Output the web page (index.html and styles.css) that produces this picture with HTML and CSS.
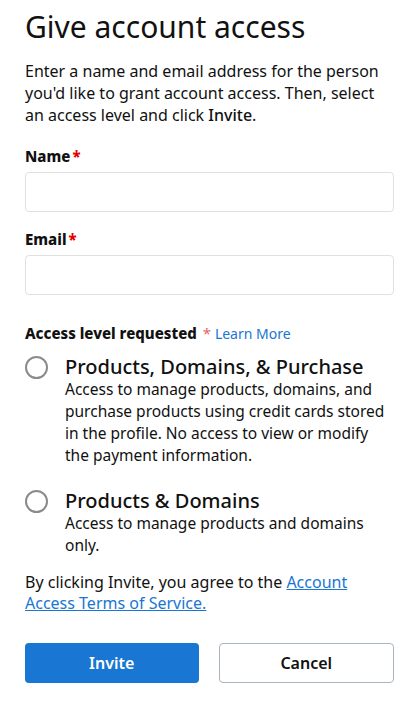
FILE: index.html
```html
<!DOCTYPE html>
<html lang="en">
<head>
  <meta charset="UTF-8">
  <meta name="viewport" content="width=device-width, initial-scale=1.0">
  <title>Give account access</title>
  <link rel="stylesheet" href="styles.css">
</head>
<body>
  <div class="container">
    <h1>Give account access</h1>
    <p class="intro">Enter a name and email address for the person you'd like to grant account access. Then, select an access level and click <span class="strong">Invite</span>.</p>

    <form id="accessForm">
      <label class="field-label" for="name">Name<span class="req">*</span></label>
      <input type="text" id="name" class="input">

      <label class="field-label" for="email">Email<span class="req">*</span></label>
      <input type="email" id="email" class="input">

      <div class="access-label">Access level requested <span class="req light">*</span> <a href="#" class="learn">Learn More</a></div>

      <label class="option">
        <span class="radio"></span>
        <span class="option-text">
          <span class="option-title">Products, Domains, &amp; Purchase</span>
          <span class="option-desc">Access to manage products, domains, and purchase products using credit cards stored in the profile. No access to view or modify the payment information.</span>
        </span>
      </label>

      <label class="option">
        <span class="radio"></span>
        <span class="option-text">
          <span class="option-title">Products &amp; Domains</span>
          <span class="option-desc">Access to manage products and domains only.</span>
        </span>
      </label>

      <p class="terms">By clicking Invite, you agree to the <a href="#">Account Access Terms of Service.</a></p>

      <div class="buttons">
        <button type="submit" class="btn btn-primary">Invite</button>
        <button type="button" class="btn btn-secondary">Cancel</button>
      </div>
    </form>
  </div>
</body>
</html>
```

FILE: styles.css
```css
body {
  font-family: "Noto Sans", Arial, sans-serif;
  background-color: #fff;
  color: #111;
  margin: 0;
  padding: 0;
}

.container {
  padding: 0 23px 0 25px;
}

h1 {
  font-size: 30px;
  font-weight: 400;
  line-height: 38px;
  margin: 8px 0 0;
  color: #111;
}

.intro {
  font-size: 16px;
  line-height: 22px;
  margin: 14px 0 0;
}

.strong {
  font-weight: 500;
}

.field-label {
  display: block;
  font-size: 15px;
  font-weight: 800;
  line-height: 22px;
  margin-top: 19px;
}

.req {
  color: #e30000;
  margin-left: 2px;
}

.req.light {
  font-weight: 400;
  color: #e36666;
}

.input {
  display: block;
  box-sizing: border-box;
  width: 100%;
  height: 40px;
  margin-top: 5px;
  border: 1px solid #e0e0e0;
  border-radius: 4px;
  padding: 0 10px;
  font-size: 16px;
  font-family: inherit;
}

form > .field-label:nth-of-type(2) {
  margin-top: 16px;
}

.access-label {
  font-size: 15px;
  font-weight: 800;
  line-height: 22px;
  margin-top: 27px;
}

.learn {
  font-size: 14px;
  font-weight: 400;
  color: #1976d2;
  text-decoration: none;
}

.option {
  display: flex;
  gap: 17px;
  margin-top: 11px;
  cursor: pointer;
}

.option + .option {
  margin-top: 24px;
}

.radio {
  flex: none;
  box-sizing: border-box;
  width: 23px;
  height: 23px;
  border: 2px solid #8a8a8a;
  border-radius: 50%;
}

.option-text {
  display: flex;
  flex-direction: column;
}

.option-title {
  font-size: 20px;
  font-weight: 500;
  line-height: 22px;
}

.option-desc {
  font-size: 15.5px;
  line-height: 22px;
}

.terms {
  font-size: 16px;
  line-height: 21px;
  margin: 16px 0 0;
}

.terms a {
  color: #1976d2;
}

.buttons {
  display: flex;
  gap: 20px;
  margin-top: 29px;
}

.btn {
  flex: 1;
  height: 40px;
  border-radius: 4px;
  font-family: inherit;
  font-size: 16px;
  font-weight: 600;
  cursor: pointer;
}

.btn-primary {
  background-color: #1976d2;
  color: #fff;
  border: none;
}

.btn-secondary {
  background-color: #fff;
  color: #111;
  border: 1px solid #aab4be;
}
```
